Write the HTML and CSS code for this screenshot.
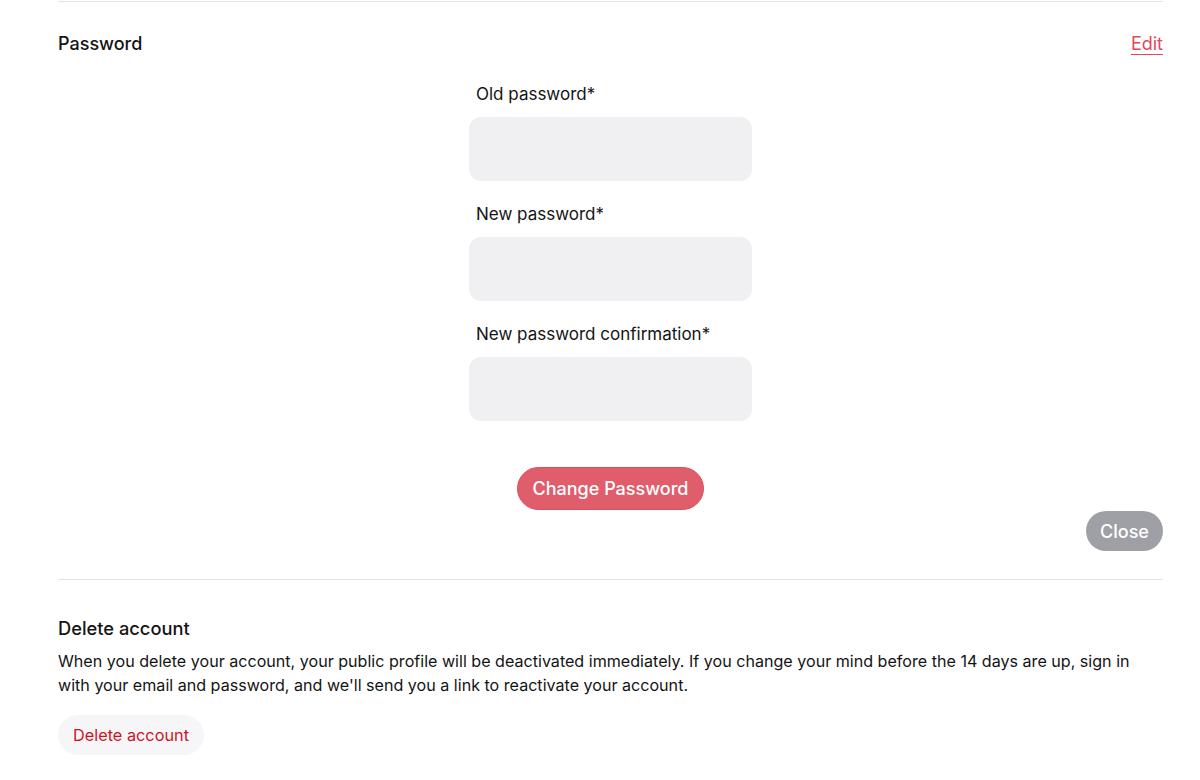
FILE: index.html
```html
<!DOCTYPE html>
<html lang="en">
<head>
<meta charset="utf-8">
<title>Account settings</title>
<link rel="stylesheet" href="styles.css">
</head>
<body>
<div class="page">
  <section class="section password">
    <div class="section-head">
      <h2 class="section-title">Password</h2>
      <a class="edit-link" href="#">Edit</a>
    </div>
    <form class="pw-form">
      <div class="field">
        <label class="field-label">Old password*</label>
        <input class="field-input" type="password">
      </div>
      <div class="field">
        <label class="field-label">New password*</label>
        <input class="field-input" type="password">
      </div>
      <div class="field">
        <label class="field-label">New password confirmation*</label>
        <input class="field-input" type="password">
      </div>
      <button class="btn-primary" type="button">Change Password</button>
    </form>
    <div class="close-row">
      <button class="btn-close" type="button">Close</button>
    </div>
  </section>
  <section class="section delete">
    <h2 class="delete-title">Delete account</h2>
    <p class="delete-text">When you delete your account, your public profile will be deactivated immediately. If you change your mind before the 14 days are up, sign in with your email and password, and we'll send you a link to reactivate your account.</p>
    <button class="btn-delete" type="button">Delete account</button>
  </section>
</div>
</body>
</html>
```

FILE: styles.css
```css
* { box-sizing: border-box; }
html, body { margin: 0; padding: 0; background: #fff; }
body {
  font-family: Inter, "Noto Sans", sans-serif;
  color: #141414;
}
.page {
  margin-left: 58px;
  width: 1105px;
  border-top: 1px solid #e4e4e8;
  margin-top: 1px;
}
.section-head {
  display: flex;
  justify-content: space-between;
  align-items: center;
  padding-top: 31px;
}
.section-title {
  margin: 0;
  font-size: 18px;
  font-weight: 500;
  line-height: 22px;
}
.edit-link {
  font-size: 18px;
  color: #e0485c;
  text-decoration: underline;
  text-underline-offset: 4px;
  line-height: 22px;
}
.pw-form {
  width: 283px;
  margin: 28px auto 0;
  display: flex;
  flex-direction: column;
  align-items: center;
}
.field {
  width: 100%;
  display: flex;
  flex-direction: column;
  margin-bottom: 22px;
}
.field:last-of-type { margin-bottom: 46px; }
.field-label {
  font-size: 17px;
  line-height: 22px;
  padding-left: 7px;
  margin-bottom: 12px;
  color: #141414;
}
.field-input {
  height: 64px;
  width: 100%;
  border: none;
  border-radius: 12px;
  background: #f0f0f2;
  outline: none;
}
.btn-primary {
  width: 187px;
  height: 43px;
  border: 1px solid #dc4d5c;
  border-radius: 22px;
  background: #e05d6b;
  color: #fff;
  font-family: inherit;
  font-size: 18px;
  font-weight: 500;
  cursor: pointer;
}
.close-row {
  display: flex;
  justify-content: flex-end;
  margin-top: 1px;
  padding-bottom: 28px;
  border-bottom: 1px solid #e2e2ea;
}
.btn-close {
  width: 77px;
  height: 40px;
  border: none;
  border-radius: 20px;
  background: #9ea0a5;
  color: #fff;
  font-family: inherit;
  font-size: 18px;
  font-weight: 500;
}
.delete { padding-top: 36px; }
.delete-title {
  margin: 0;
  font-size: 18.3px;
  font-weight: 500;
  line-height: 24px;
}
.delete-text {
  margin: 9px 0 18px;
  font-size: 16.1px;
  line-height: 24px;
}
.btn-delete {
  height: 40px;
  padding: 0 15px;
  border: none;
  border-radius: 20px;
  background: #f6f6f9;
  color: #d0121c;
  font-family: inherit;
  font-size: 16.3px;
}
```
